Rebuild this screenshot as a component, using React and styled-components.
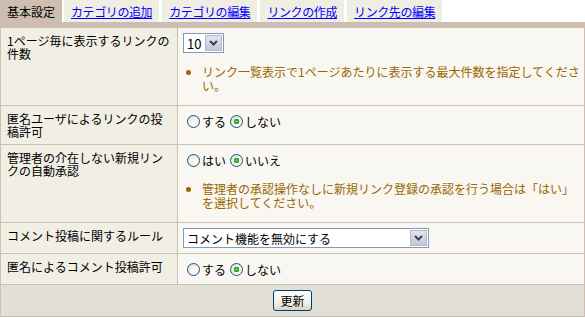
import React from "react";
import styled, { createGlobalStyle } from "styled-components";

const GlobalStyle = createGlobalStyle`
  html, body {
    margin: 0;
    padding: 0;
    background: #ffffff;
  }
  body {
    font-family: "Noto Sans CJK JP", "Noto Sans", sans-serif;
    font-size: 12px;
    color: #000000;
  }
`;

const tabs = [
  { label: "基本設定", active: true },
  { label: "カテゴリの追加" },
  { label: "カテゴリの編集" },
  { label: "リンクの作成" },
  { label: "リンク先の編集" },
];

const TabBar = styled.ul`
  display: flex;
  margin: 0;
  padding: 0;
  list-style: none;
  height: 22px;
  border-bottom: 5px solid #cdbeb1;
`;

const Tab = styled.li`
  display: flex;
  align-items: center;
  height: 22px;
  padding: 0 7px;
  margin-right: 3px;
  background: ${(p) => (p.$active ? "#cdbeb1" : "#f0ede3")};
  &:first-child {
    margin-right: 2px;
  }
`;

const TabLink = styled.a`
  color: #0000ff;
  text-decoration: underline;
  letter-spacing: -0.4px;
  cursor: pointer;
`;

const Table = styled.table`
  width: 585px;
  border-collapse: collapse;
  table-layout: fixed;
`;

const LabelCol = styled.col`
  width: 177px;
`;

const Label = styled.td`
  background: #f1eee4;
  border: 1px solid #cdbfb2;
  padding: 6px;
  line-height: 13px;
  vertical-align: top;
`;

const Value = styled.td`
  background: #f8f7f1;
  border: 1px solid #cdbfb2;
  padding: 5px 3px 5px 5px;
  vertical-align: top;
`;

const Footer = styled.td`
  background: #e2dfd7;
  border: 1px solid #cdbfb2;
  padding: 5px 0;
  text-align: center;
`;

const Controls = styled.div`
  display: flex;
  align-items: center;
  height: 20px;
`;

const RadioLabel = styled.label`
  display: inline-flex;
  align-items: center;
  line-height: 13px;
`;

const Radio = styled.input.attrs({ type: "radio" })`
  appearance: none;
  box-sizing: border-box;
  width: 13px;
  height: 13px;
  margin: 0 2px 0 4px;
  border: 1px solid #1d5281;
  border-radius: 50%;
  background: radial-gradient(circle at 65% 65%, #ffffff 0, #f4f3ee 40%, #d8d6cb 100%);
  &:checked {
    background: radial-gradient(circle, #7be07b 0, #2fb52f 1.5px, #1f951f 2.6px, transparent 3px),
      radial-gradient(circle at 65% 65%, #ffffff 0, #f4f3ee 40%, #d8d6cb 100%);
  }
`;

const SelectBox = styled.span`
  display: inline-flex;
  box-sizing: border-box;
  width: ${(p) => p.$width}px;
  height: 20px;
  border: 1px solid #7f9db9;
  background: #ffffff;
`;

const NativeSelect = styled.select`
  appearance: none;
  flex: 1;
  min-width: 0;
  border: none;
  background: transparent;
  font: inherit;
  font-size: ${(p) => p.$size || 12}px;
  color: #000000;
  padding: 0 0 0 3px;
  outline: none;
`;

const ArrowBox = styled.span`
  display: flex;
  align-items: center;
  justify-content: center;
  box-sizing: border-box;
  width: 17px;
  height: 16px;
  margin: 1px;
  border: 1px solid #b7b8c9;
  background: linear-gradient(#e4e4ee, #c5c5d8);
`;

const Note = styled.ul`
  margin: 12px 0 7px;
  padding-left: 19px;
  color: #9a6700;
  line-height: 14px;
`;

const Button = styled.button`
  box-sizing: border-box;
  height: 21px;
  padding: 0 6px;
  font: inherit;
  color: #000000;
  border: 1px solid #003c74;
  border-radius: 3px;
  background: linear-gradient(#ffffff, #f2f1ea 60%, #d9d4c8);
`;

const Arrow = () => (
  <svg width="9" height="6" viewBox="0 0 9 6">
    <polyline points="1,1 4.5,4.5 8,1" fill="none" stroke="#3f3f55" strokeWidth="2" />
  </svg>
);

const Select = ({ width, options, size }) => (
  <SelectBox $width={width}>
    <NativeSelect $size={size} defaultValue={options[0]}>
      {options.map((o) => (
        <option key={o}>{o}</option>
      ))}
    </NativeSelect>
    <ArrowBox>
      <Arrow />
    </ArrowBox>
  </SelectBox>
);

const RadioGroup = ({ name, options, checked }) => (
  <Controls>
    {options.map((o) => (
      <RadioLabel key={o}>
        <Radio name={name} defaultChecked={o === checked} />
        {o}
      </RadioLabel>
    ))}
  </Controls>
);

export default function App() {
  return (
    <>
      <GlobalStyle />
      <TabBar>
        {tabs.map((t) => (
          <Tab key={t.label} $active={t.active}>
            {t.active ? t.label : <TabLink>{t.label}</TabLink>}
          </Tab>
        ))}
      </TabBar>
      <Table>
        <colgroup>
          <LabelCol />
          <col />
        </colgroup>
        <tbody>
          <tr>
            <Label>1ページ毎に表示するリンクの件数</Label>
            <Value>
              <Controls>
                <Select width={41} size={13} options={["10", "20", "30", "50"]} />
              </Controls>
              <Note>
                <li>リンク一覧表示で1ページあたりに表示する最大件数を指定してください。</li>
              </Note>
            </Value>
          </tr>
          <tr>
            <Label>匿名ユーザによるリンクの投稿許可</Label>
            <Value>
              <RadioGroup name="anon" options={["する", "しない"]} checked="しない" />
            </Value>
          </tr>
          <tr>
            <Label>管理者の介在しない新規リンクの自動承認</Label>
            <Value>
              <RadioGroup name="auto" options={["はい", "いいえ"]} checked="いいえ" />
              <Note>
                <li>管理者の承認操作なしに新規リンク登録の承認を行う場合は「はい」を選択してください。</li>
              </Note>
            </Value>
          </tr>
          <tr>
            <Label>コメント投稿に関するルール</Label>
            <Value>
              <Controls>
                <Select width={246} options={["コメント機能を無効にする"]} />
              </Controls>
            </Value>
          </tr>
          <tr>
            <Label>匿名によるコメント投稿許可</Label>
            <Value>
              <RadioGroup name="comment" options={["する", "しない"]} checked="しない" />
            </Value>
          </tr>
          <tr>
            <Footer colSpan={2}>
              <Button>更新</Button>
            </Footer>
          </tr>
        </tbody>
      </Table>
    </>
  );
}
